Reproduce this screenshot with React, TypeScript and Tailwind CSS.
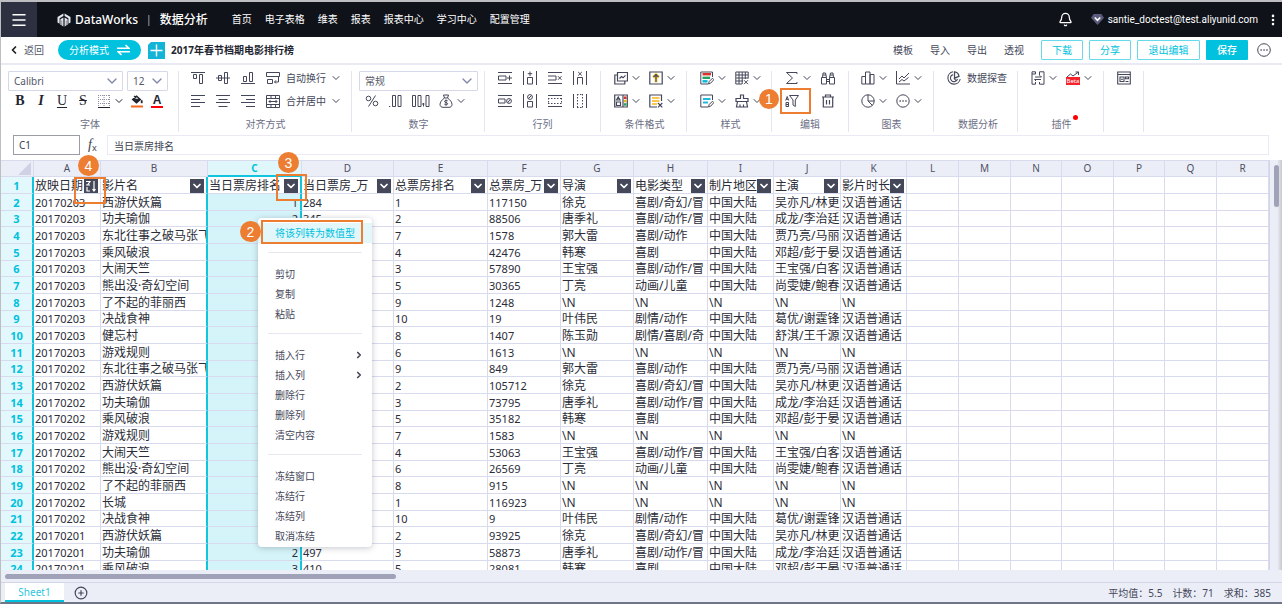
import React from "react";
import {
	Bell,
	ChevronDown,
	ChevronLeft,
	ChevronRight,
	CirclePlus,
	EllipsisVertical,
	Menu,
} from "lucide-react";

type movieType = {
	director: string;
	genre: string;
	region: string;
	cast: string;
	language: string;
};

const none = "\\N";

const unknown: movieType = {
	director: none,
	genre: none,
	region: none,
	cast: none,
	language: none,
};

const movie = (director: string, genre: string, cast: string): movieType => ({
	director,
	genre,
	region: "中国大陆",
	cast,
	language: "汉语普通话",
});

const movies: Record<string, movieType> = {
	西游伏妖篇: movie("徐克", "喜剧/奇幻/冒", "吴亦凡/林更"),
	功夫瑜伽: movie("唐季礼", "喜剧/动作/冒", "成龙/李治廷"),
	东北往事之破马张飞: movie("郭大雷", "喜剧/动作", "贾乃亮/马丽"),
	乘风破浪: movie("韩寒", "喜剧", "邓超/彭于晏"),
	大闹天竺: movie("王宝强", "喜剧/动作/冒", "王宝强/白客"),
	"熊出没·奇幻空间": movie("丁亮", "动画/儿童", "尚雯婕/鲍春"),
	决战食神: movie("叶伟民", "剧情/动作", "葛优/谢霆锋"),
	健忘村: movie("陈玉勋", "剧情/喜剧/奇", "舒淇/王千源"),
};

// date, title, rank of the day, box office of the day, total rank, total box office
const records: string[][] = [
	["20170203", "西游伏妖篇", "1", "284", "1", "117150"],
	["20170203", "功夫瑜伽", "2", "345", "2", "88506"],
	["20170203", "东北往事之破马张飞", "", "", "7", "1578"],
	["20170203", "乘风破浪", "", "", "4", "42476"],
	["20170203", "大闹天竺", "", "", "3", "57890"],
	["20170203", "熊出没·奇幻空间", "", "", "5", "30365"],
	["20170203", "了不起的菲丽西", "", "", "9", "1248"],
	["20170203", "决战食神", "", "", "10", "19"],
	["20170203", "健忘村", "", "", "8", "1407"],
	["20170203", "游戏规则", "", "", "6", "1613"],
	["20170202", "东北往事之破马张飞", "", "", "9", "849"],
	["20170202", "西游伏妖篇", "", "", "2", "105712"],
	["20170202", "功夫瑜伽", "", "", "3", "73795"],
	["20170202", "乘风破浪", "", "", "5", "35182"],
	["20170202", "游戏规则", "", "", "7", "1583"],
	["20170202", "大闹天竺", "", "", "4", "53063"],
	["20170202", "熊出没·奇幻空间", "", "", "6", "26569"],
	["20170202", "了不起的菲丽西", "", "", "8", "915"],
	["20170202", "长城", "", "", "1", "116923"],
	["20170202", "决战食神", "", "", "10", "9"],
	["20170201", "西游伏妖篇", "", "", "2", "93925"],
	["20170201", "功夫瑜伽", "2", "497", "3", "58873"],
	["20170201", "乘风破浪", "3", "410", "5", "28081"],
];

const columns = [
	{ name: "A", width: "w-[67px]", title: "放映日期" },
	{ name: "B", width: "w-[107px]", title: "影片名" },
	{ name: "C", width: "w-[94px]", title: "当日票房排名" },
	{ name: "D", width: "w-[92px]", title: "当日票房_万" },
	{ name: "E", width: "w-[94px]", title: "总票房排名" },
	{ name: "F", width: "w-[73px]", title: "总票房_万" },
	{ name: "G", width: "w-[73px]", title: "导演" },
	{ name: "H", width: "w-[74px]", title: "电影类型" },
	{ name: "I", width: "w-[66px]", title: "制片地区" },
	{ name: "J", width: "w-[67px]", title: "主演" },
	{ name: "K", width: "w-[66px]", title: "影片时长" },
	{ name: "L", width: "w-[52px]", title: "" },
	{ name: "M", width: "w-[52px]", title: "" },
	{ name: "N", width: "w-[51px]", title: "" },
	{ name: "O", width: "w-[52px]", title: "" },
	{ name: "P", width: "w-[51px]", title: "" },
	{ name: "Q", width: "w-[52px]", title: "" },
	{ name: "R", width: "w-[52px]", title: "" },
];

const navItems = ["首页", "电子表格", "维表", "报表", "报表中心", "学习中心", "配置管理"];
const fileActions = ["模板", "导入", "导出", "透视"];
const menuGroups = [
	["剪切", "复制", "粘贴"],
	["插入行", "插入列", "删除行", "删除列", "清空内容"],
	["冻结窗口", "冻结行", "冻结列", "取消冻结"],
];

type iconProps = { children: React.ReactNode; wide?: boolean };
function Icon({ children, wide }: iconProps) {
	return (
		<svg
			viewBox={wide ? "0 0 19 14" : "0 0 14 14"}
			className={wide ? "h-3.5 w-[19px]" : "size-3.5"}
			fill="none"
			stroke="currentColor"
			strokeWidth="1"
		>
			{children}
		</svg>
	);
}

type toolProps = {
	label: string;
	children: React.ReactNode;
	text?: string;
	arrow?: boolean;
	wide?: boolean;
};
function Tool({ label, children, text, arrow, wide }: toolProps) {
	return (
		<button
			aria-label={text ? undefined : label}
			title={label}
			className="flex h-3.5 shrink-0 cursor-pointer items-center gap-1"
		>
			<Icon wide={wide}>{children}</Icon>
			{text && <span className="mx-0.5 leading-[14px] whitespace-nowrap">{text}</span>}
			{arrow && <ChevronDown className="-mx-0.5 size-3" strokeWidth={2} />}
		</button>
	);
}

type groupProps = {
	label: string;
	className: string;
	top: React.ReactNode;
	bottom?: React.ReactNode;
	bottomClass?: string;
	dot?: boolean;
};
function Group({ label, className, top, bottom, bottomClass = "gap-[11px]", dot }: groupProps) {
	return (
		<div className={`flex h-[61px] shrink-0 flex-col border-r border-[#e3e5f0] ${className}`}>
			<div className={`flex h-6 items-start ${bottomClass}`}>{top}</div>
			<div className={`flex h-[22px] items-start ${bottomClass}`}>{bottom}</div>
			<p className="self-center leading-4 text-[#6b6e85]">
				<span className="relative">
					{label}
					{dot && <span className="absolute -top-0.5 -right-1.5 size-[5px] rounded-full bg-[#ff0000]" />}
				</span>
			</p>
		</div>
	);
}

type pickerProps = { label: string; value: string; className: string };
function Picker({ label, value, className }: pickerProps) {
	return (
		<div className={`relative ${className}`}>
			<select
				aria-label={label}
				className="h-5 w-full appearance-none rounded-[1px] border border-[#d5d8e8] bg-white pl-[5px] text-[10px] leading-4 text-[#555869]"
			>
				<option>{value}</option>
			</select>
			<ChevronDown className="pointer-events-none absolute top-0.5 right-[3px] size-4 text-[#8186a8]" />
		</div>
	);
}

function TopBar() {
	return (
		<header className="flex h-[35px] shrink-0 items-center bg-[#0f1219] pr-0.5 text-[10px] text-white">
			<button aria-label="菜单" className="flex h-full w-9 items-center justify-center bg-[#2d3040]">
				<Menu className="size-[18px]" strokeWidth={2} />
			</button>
			<svg viewBox="0 0 14 14" className="ml-5 size-3.5" fill="#e4e7ee">
				<path d="M.5 4 6.4.6V3L2.6 5.2v5.6L.5 9.6zM7.6.6 13.5 4v5.6l-2.1 1.2V5.2L7.6 3z" />
				<path d="M3.4 6.2 6.4 4.4v9.2l-1.300-.8V7.200l-.4.2v5.1l-1.3-.8zM7.600 4.4l3 1.8v5.5l-1.3.8V7.400l-.4-.2v5.6l-1.3.8z" />
			</svg>
			<span className="ml-1 text-[12px] font-medium">DataWorks</span>
			<span className="mx-2 text-[10px] text-[#b8bac4]">|</span>
			<span className="text-[12px] font-medium whitespace-nowrap">数据分析</span>
			<nav className="ml-6 flex gap-[13px]">
				{navItems.map((item) => (
					<a key={item} href="#" className="whitespace-nowrap">
						{item}
					</a>
				))}
			</nav>
			<button aria-label="通知" className="ml-auto">
				<Bell className="size-[15px]" strokeWidth={2} />
			</button>
			<svg viewBox="0 0 12 12" className="ml-[18px] size-[13px]">
				<path d="M2.5 1h7L12 4.3 6 11 0 4.3z" fill="#5c5b7d" />
				<path d="M3.5 4.2 6 6.8l2.5-2.6" fill="none" stroke="#fff" strokeWidth="1.5" />
			</svg>
			<span className="ml-1 font-['Roboto',sans-serif] text-[10px]">santie_doctest@test.aliyunid.com</span>
			<button aria-label="更多" className="ml-2">
				<EllipsisVertical className="size-3.5" strokeWidth={2.5} />
			</button>
		</header>
	);
}

function TitleBar() {
	return (
		<div className="flex h-7 shrink-0 items-center border-b-2 border-[#e9eaf3] pr-[11px] pl-[7px]">
			<a href="#" className="flex items-center gap-1 text-[#555869]">
				<ChevronLeft className="size-3 text-[#222]" strokeWidth={3.5} />
				返回
			</a>
			<button className="ml-3.5 flex h-5 w-[83px] items-center justify-center gap-2 rounded-full bg-[#00c1de] text-white">
				分析模式
				<svg viewBox="0 0 13 12" className="h-3 w-[13px]" fill="none" stroke="currentColor" strokeWidth="1.6">
					<path d="M0 4.3h12L8.5 1M13 7.7H1L4.5 11" />
				</svg>
			</button>
			<svg viewBox="0 0 17 17" className="ml-[7px] size-[17px]">
				<path d="M3 0h14v17H0V3z" fill="#14b4d8" />
				<path d="M8.5 2.5v12M2.5 8.5h12" stroke="#fff" strokeWidth="1.4" />
			</svg>
			<h1 className="ml-1.5 font-bold whitespace-nowrap text-[#222530]">2017年春节档期电影排行榜</h1>
			<div className="ml-auto flex items-center gap-[17px]">
				{fileActions.map((action) => (
					<button key={action} className="whitespace-nowrap">
						{action}
					</button>
				))}
			</div>
			<div className="ml-[17px] flex items-center gap-1.5 text-[#00c1de]">
				<button className="h-5 w-[42px] rounded-[1px] border border-[#66daeb]">下载</button>
				<button className="h-5 w-[42px] rounded-[1px] border border-[#66daeb]">分享</button>
				<button className="h-5 w-[63px] rounded-[1px] border border-[#66daeb]">退出编辑</button>
				<button className="h-5 w-[42px] rounded-[1px] bg-[#00c1de] font-medium text-white">保存</button>
			</div>
			<button aria-label="更多操作" className="ml-[9px]">
				<Icon>
					<circle cx="7" cy="7" r="6.3" />
					<path d="M3.5 7h1.3M6.4 7h1.3M9.3 7h1.3" strokeWidth="1.3" />
				</Icon>
			</button>
		</div>
	);
}

function Toolbar() {
	return (
		<div className="flex shrink-0 overflow-hidden pt-1.5 pb-[3px]">
			<div className="flex h-[61px] w-[178px] shrink-0 flex-col border-r border-[#e3e5f0] pl-[7px]">
				<div className="flex h-6 gap-1">
					<Picker label="字体" value="Calibri" className="w-[115px]" />
					<Picker label="字号" value="12" className="w-[41px]" />
				</div>
				<div className="flex h-[22px] items-start gap-[7px] pl-[5px] font-['Liberation_Serif',serif] text-[14px] leading-[14px] text-[#222530]">
					<button aria-label="加粗" className="w-3.5 font-bold">
						B
					</button>
					<button aria-label="斜体" className="w-3.5 font-bold italic">
						I
					</button>
					<button aria-label="下划线" className="w-3.5">
						<span className="underline underline-offset-2">U</span>
					</button>
					<button aria-label="删除线" className="w-3.5 line-through">
						S
					</button>
					<Tool label="边框" arrow>
						<path d="M1 1.5h12M1 5.5h12M1 9.5h12M1.5 1v11M7 1v11M12.5 1v11" stroke="#8b8ea3" strokeDasharray="1 1" />
						<path d="M1 13.5h12" />
					</Tool>
					<Tool label="填充颜色">
						<path d="M2.5 5.5 6.5 2l4 3.5-4 3.5zM4 2l2 1.5" fill="#222530" strokeWidth="1.2" />
						<path d="M5 4.7h3.5L6.6 3.3z" fill="#fff" stroke="none" />
						<path d="M11.7 6.2v3" strokeWidth="1.8" />
						<path d="M1 12.5h12" stroke="#f26a1b" strokeWidth="2" />
					</Tool>
					<button
						aria-label="字体颜色"
						className="h-3.5 w-3 border-b-2 border-[#ff0000] font-['Liberation_Sans',sans-serif] text-[12px] leading-3 font-bold"
					>
						A
					</button>
				</div>
				<p className="self-center pr-1.5 leading-4 text-[#6b6e85]">字体</p>
			</div>

			<Group
				label="对齐方式"
				className="pr-[11px] pl-3"
				top={
					<>
						<Tool label="顶端对齐">
							<path d="M0 1.5h14M2.5 3.5h3v4h-3zM8.5 3.5h3v9h-3z" />
						</Tool>
						<Tool label="垂直居中">
							<path d="M0 7h14M2.5 4.5h3v5h-3zM8.5 1.5h3v11h-3z" />
						</Tool>
						<Tool label="底端对齐">
							<path d="M0 12.5h14M2.5 5.5h3v5h-3zM8.5 1.5h3v9h-3z" />
						</Tool>
						<Tool label="自动换行" text="自动换行" arrow>
							<path d="M.5 1.5h13v4H.5zM1.5 8.5h5v4h-5zM12.5 5.5V11h-4M10 9.300 8.500 11l1.500 1.500" />
						</Tool>
					</>
				}
				bottom={
					<>
						<Tool label="左对齐">
							<path d="M0 1.5h14M0 5.5h9M0 8.5h14M0 12.5h9" />
						</Tool>
						<Tool label="居中对齐">
							<path d="M0 1.5h14M2.5 5.5h9M0 8.5h14M2.5 12.5h9" />
						</Tool>
						<Tool label="右对齐">
							<path d="M0 1.5h14M5 5.5h9M0 8.5h14M5 12.5h9" />
						</Tool>
						<Tool label="合并居中" text="合并居中" arrow>
							<path d="M.5 1.5h13v12H.5zM.5 4.5h13M.5 10.5h13M5 1.5v3M9.5 1.5v3M5 10.5v3M9.5 10.5v3M3 7.5h8M4.5 6 3 7.5 4.500 9M9.500 6 11 7.5 9.500 9" />
						</Tool>
					</>
				}
			/>

			<Group
				label="数字"
				className="pr-1.5 pl-[7px]"
				top={<Picker label="数字格式" value="常规" className="w-[119px]" />}
				bottom={
					<div className="flex gap-[9px] pl-1.5">
						<Tool label="百分比">
							<circle cx="3.5" cy="4.5" r="2.3" />
							<circle cx="10.5" cy="9.5" r="2.3" />
							<path d="M10.5 1.5 3.5 12.5" />
						</Tool>
						<Tool label="减少小数位">
							<path d="M1 12.5h1.3M4.5 1.5h3v11h-3zM10 1.5h3v11h-3z" />
						</Tool>
						<Tool label="增加小数位" wide>
							<path d="M1.5 1.5h3v11h-3zM7 1.5h3v11H7zM15 1.5h3v11h-3zM11 10h2.5M12.5 9v3.5" />
						</Tool>
						<Tool label="货币" arrow>
							<path d="M4.5 1h5l-1 3h-3zM5.5 4C2.5 6 1 8.5 1 10.5s1.500 2.800 3 2.800h6c1.500 0 3-.8 3-2.800S11.500 6 8.500 4" />
							<path d="M8.700 6.900c-1-.9-3.200-.6-3.200.6 0 1.500 3.200.8 3.200 2.200 0 1.300-2.300 1.400-3.400.4M7 5.600v6" />
						</Tool>
					</div>
				}
			/>

			<Group
				label="行列"
				className="px-[13px]"
				top={
					<>
						<Tool label="插入行">
							<path d="M0 1.5h14M0 12.5h14M.5 5H8v4H.5zM11.5 4.5v5M9 7h5" />
						</Tool>
						<Tool label="插入列">
							<path d="M.5 0v14M13.5 0v14M4.5 6.5h5V13h-5zM7 .5V5M4.8 2.7h4.4" />
						</Tool>
						<Tool label="删除行">
							<path d="M0 1.5h14M0 12.5h14M0 5h8v4H0M10 5.2l3.5 3.6M13.5 5.2 10 8.8" />
						</Tool>
						<Tool label="删除列">
							<path d="M.5 0v14M13.5 0v14M4.5 13.5v-7h5v7M5.2 1l3.6 3.5M8.8 1 5.2 4.5" />
						</Tool>
					</>
				}
				bottom={
					<>
						<Tool label="隐藏行">
							<path d="M0 1.5h14M0 12.5h14M.5 5H7v4H.5zM9.5 8.8l3-3.6" />
							<circle cx="11" cy="7" r="2.4" />
						</Tool>
						<Tool label="隐藏列">
							<path d="M.5 0v14M13.5 0v14M4.5 7.5h5V13h-5zM5.5 4.5l3-3" />
							<circle cx="7" cy="3" r="2.4" />
						</Tool>
						<Tool label="取消隐藏行">
							<path d="M0 1.5h14M0 12.5h14" />
							<path d="M0 4.5h14M0 9.5h14M.5 4v6M13.5 4v6" strokeDasharray="1.5 1.5" />
						</Tool>
						<Tool label="取消隐藏列">
							<path d="M.5 0v14M13.5 0v14" />
							<path d="M4.5 0v14M9.5 0v14M4 .5h6M4 13.5h6" strokeDasharray="1.5 1.5" />
						</Tool>
					</>
				}
			/>

			<Group
				label="条件格式"
				className="pr-[11px] pl-[13px]"
				bottomClass="gap-[9px]"
				top={
					<>
						<Tool label="突出显示" arrow>
							<path d="M3.5 1.5h10V10h-10zM3.5 4H.8v9h10v-3M5.5 7.5l2-2L9 6.800l2.500-2.500" strokeWidth="1.2" />
						</Tool>
						<Tool label="色阶" arrow>
							<path d="M7 11.5V5M4 6.5l3-3 3 3" stroke="#ffd24a" strokeWidth="3" />
							<path d="M.8 1h12.4v12H.8zM7 11V4M4.5 6 7 3.5 9.5 6" strokeWidth="1.2" />
						</Tool>
					</>
				}
				bottom={
					<>
						<Tool label="图标集" arrow>
							<path d="M.7 1h12.6v12H.7zM9 1v12M2.5 6l1.7-3L6 6zM2.5 8h4v3.5h-4z" strokeWidth="1.2" />
							<path d="M10 2.5h2.5V5H10z" fill="#e0302a" stroke="none" />
							<path d="M10 5.8h2.5v2.5H10z" fill="#e8b21a" stroke="none" />
							<path d="M10 9.2h2.5v2.5H10z" fill="#20a465" stroke="none" />
						</Tool>
						<Tool label="清除规则" arrow>
							<path d="M12.5 7V1H.8v12H8M9 9l4.3 4.3M13.3 9 9 13.3" strokeWidth="1.2" />
							<path d="M3 4h7.5M3 7h7.5M3 10h5" stroke="#ffc84d" strokeWidth="2" />
						</Tool>
					</>
				}
			/>

			<Group
				label="样式"
				className="pr-2.5 pl-[13px]"
				bottomClass="gap-[9px]"
				top={
					<>
						<Tool label="套用格式" arrow>
							<path d="M12.5 6V1H.8v12H8M8.5 13l.7-2.5 3.3-3.3 1.3 1.5-3.2 3.5z" />
							<path d="M2.5 3.2H11" stroke="#e0302a" strokeWidth="2.4" />
							<path d="M2.5 6.8H10" stroke="#20a465" strokeWidth="2.4" />
							<path d="M2.5 10.3h5" stroke="#00b8d9" strokeWidth="2.4" />
						</Tool>
						<Tool label="清除表格样式" arrow>
							<path d="M7 13H.8V1h12.400v6.500M.8 4h12.400M.8 7h12.400M.8 10H8M4 1v12M7.200 1v12M10.300 1v7M9 9.200l4 4M13 9.200l-4 4" />
						</Tool>
					</>
				}
				bottom={
					<>
						<Tool label="单元格样式" arrow>
							<path d="M12.5 6V1H.8v12H8M8.5 13l.7-2.5 3.3-3.3 1.3 1.5-3.2 3.5z" />
							<path d="M3 5h7.5M3 8.5h5" stroke="#22b8e0" strokeWidth="1.8" />
						</Tool>
						<Tool label="清除格式" arrow>
							<path d="M5.5 4.5V1h3v3.500H13v3H1v-3zM2.500 7.500l-1 5.500h11l-1-5.500M5 10.500V13M8.500 10.500V13" strokeWidth="1.2" />
						</Tool>
					</>
				}
			/>

			<Group
				label="编辑"
				className="px-[13px]"
				bottomClass="justify-between"
				top={
					<>
						<Tool label="求和" arrow>
							<path d="M12 3V1.500H1.500L7.500 7l-6 5.500H12V11" />
						</Tool>
						<span className="w-2.5" />
						<Tool label="查找">
							<path d="M.5 6.500h5V13h-5zM8.500 6.500h5V13h-5zM1.500 6.500 2 2h2.500l1 4.500M8.500 6.500l1-4.500H12l.5 4.500M5.500 8.500h3M5.500 10.500h3M2 4h3M9 4h3" />
						</Tool>
					</>
				}
				bottom={
					<>
						<div className="relative">
							<Tool label="筛选">
								<path d="M4.500 1.500h9L10.300 6v6.500L8 11V6zM.7 6.500l1.500-4 1.500 4M1.200 5.300h2M1 8.500h2.500v4H1zM1 10.500h2.500" />
							</Tool>
							<Marker text="1" box="-top-1.5 -left-[5px] h-[26px] w-[31px]" dot="-top-[5px] -left-[26px] size-5" />
						</div>
						<Tool label="删除">
							<path d="M1 3h12M4.5 3V1h5v2M2.3 3v10h9.4V3M5.5 6v4.5M8.5 6v4.5" strokeWidth="1.2" />
						</Tool>
					</>
				}
			/>

			<Group
				label="图表"
				className="pr-[11px] pl-3"
				bottomClass="gap-[9px]"
				top={
					<>
						<Tool label="柱状图" arrow>
							<path d="M.8 5.5h3.7V13H.8zM4.5 1H9v12H4.5zM9 3.5h4V13H9z" />
						</Tool>
						<Tool label="折线图" arrow>
							<path d="M.5 0v13H14M3 8l3-3 2 2 5-5M3 11l3-2.5L8 10l4.500-3.500" />
						</Tool>
					</>
				}
				bottom={
					<>
						<Tool label="饼图" arrow>
							<circle cx="7" cy="7" r="6.2" />
							<path d="M7 .8V7h6.2M7 7l4.4 4.4" />
						</Tool>
						<Tool label="更多图表" arrow>
							<circle cx="7" cy="7" r="6.2" />
							<path d="M3.5 7h1.3M6.4 7h1.3M9.3 7h1.3" strokeWidth="1.3" />
						</Tool>
					</>
				}
			/>

			<Group
				label="数据分析"
				className="pr-2 pl-[13px]"
				top={
					<Tool label="数据探查" text="数据探查">
						<path d="M6 .8A6.200 6.200 0 1 0 13.200 8M6 3.600A3.600 3.600 0 1 0 10.500 8M7 7.300l2.500 2.700" strokeWidth="1.1" />
						<path d="M7.500.8v6.400L12 5.300C11.600 2.800 10 1 7.500.8z" strokeWidth="1.3" />
					</Tool>
				}
			/>

			<Group
				label="插件"
				dot
				className="pr-[11px] pl-[13px]"
				bottomClass="gap-[9px]"
				top={
					<>
						<Tool label="插件" arrow>
							<path d="M4.5 3V.8H1v12.400h3.500V11M8.500 3V.8H13v12.400H8.500V11M1 3h3.500M8.500 3v1.500M4 6h6.500M9 4.500 10.500 6M10 8.500H3.500M5 10 3.500 8.500" />
						</Tool>
						<span className="relative">
							<Tool label="智能图表" arrow>
								<path d="M1 6l3.500-3L7 5l5.500-4M9.500 1h3v3" />
							</Tool>
							<span className="absolute top-1.5 left-0 flex h-2 w-3.5 items-center justify-center bg-[#f5222d] text-[6px] leading-none text-white">
								Beta
							</span>
						</span>
					</>
				}
			/>

			<Group
				label=""
				className="pr-3 pl-[13px]"
				top={
					<Tool label="表单">
						<path d="M.7 1h12.6v12H.7zM.7 3.5h12.600M3 6h4v4.500H3zM8.500 6h3v1.800h-3zM8.500 10.500h3M4 8.200h2" strokeWidth="1.1" />
					</Tool>
				}
			/>
		</div>
	);
}

function FormulaBar() {
	return (
		<div className="flex shrink-0 items-center pr-[13px] pb-[5px] pl-3 text-[#3c3f4f]">
			<input
				aria-label="单元格"
				defaultValue="C1"
				className="h-5 w-[67px] border border-[#9b9da6] px-[5px] text-[10px]"
			/>
			<span className="w-[27px] pl-2 font-['Liberation_Serif',serif] text-[14px] leading-4 italic">
				f<sub className="font-['Noto_Sans',sans-serif] text-[9px] not-italic">x</sub>
			</span>
			<input
				aria-label="公式"
				defaultValue="当日票房排名"
				className="h-5 min-w-0 flex-1 border border-[#e9eaf3] px-1.5 text-[10px]"
			/>
		</div>
	);
}

type markerProps = { text: string; box: string; dot: string };
function Marker({ text, box, dot }: markerProps) {
	return (
		<>
			<span className={`pointer-events-none absolute border-2 border-[#ed7d31] ${box}`} />
			<span
				className={`pointer-events-none absolute flex items-center justify-center rounded-full bg-[#ed7d31] font-['Liberation_Sans',sans-serif] text-[14px] leading-none text-white ${dot}`}
			>
				{text}
			</span>
		</>
	);
}

function cellBorder(name: string) {
	return name === "B" || name === "C" ? "border-r-2 border-r-[#12c4de]" : "border-r border-r-[#d8daee]";
}

// three rows take 50px together
function rowHeight(index: number) {
	return index % 3 === 2 ? "h-4" : "h-[17px]";
}

function FilterButton({ name }: { name: string }) {
	return (
		<button
			aria-label={`筛选 ${name}`}
			className="flex size-3.5 shrink-0 items-center justify-center bg-[#454859] text-white"
		>
			{name === "A" ? (
				<Icon>
					<path d="M2 2.5h4L3.5 6M2 6h4M3 8v4h3M10 2v10M8.5 10.2 10 12l1.5-1.8" strokeWidth="1.2" />
				</Icon>
			) : (
				<ChevronDown className="size-3" strokeWidth={3.5} />
			)}
		</button>
	);
}

function Sheet() {
	const rows = records.map((record) => {
		const info = movies[record[1]] ?? unknown;
		return [...record, info.director, info.genre, info.region, info.cast, info.language];
	});

	return (
		<table className="w-full table-fixed border-separate border-spacing-0 bg-white text-[12px] leading-[14px] text-[#2b2d38]">
			<colgroup>
				<col className="w-[33px]" />
				{columns.map((column) => (
					<col key={column.name} className={column.width} />
				))}
			</colgroup>
			<thead>
				<tr className="h-[17px] bg-[#eceef7] text-[10px] text-[#4e5163]">
					<th className="border-t border-r border-b border-[#d8daee] p-0">
						<svg viewBox="0 0 13 13" className="mr-0.5 ml-auto size-[13px]">
							<path d="M13 0v13H0z" fill="#cfd2e6" />
						</svg>
					</th>
					{columns.map((column) => (
						<th
							key={column.name}
							className={
								column.name === "C"
									? "border-t border-r border-b-2 border-t-[#d8daee] border-r-[#d8daee] border-b-[#12c4de] bg-[#dff6fa] p-0 leading-[13px] font-bold text-[#00c1de]"
									: "border-t border-r border-b border-[#d8daee] p-0 leading-[13px] font-normal"
							}
						>
							{column.name}
						</th>
					))}
				</tr>
			</thead>
			<tbody>
				<tr className="h-[17px]">
					<th className="border-r-2 border-b border-r-[#12c4de] border-b-[#d8daee] bg-[#e3f8fc] p-0 pt-px text-[11px] font-bold text-[#00c1de]">
						1
					</th>
					{columns.map((column) => (
						<td key={column.name} className={`border-b border-b-[#d8daee] p-0 pt-px ${cellBorder(column.name)}`}>
							{column.title && (
								<div className="flex items-center pr-0.5 pl-px">
									<span className="flex-1 overflow-hidden whitespace-nowrap">{column.title}</span>
									<FilterButton name={column.name} />
								</div>
							)}
						</td>
					))}
				</tr>
				{rows.map((row, index) => (
					<tr key={index} className={rowHeight(index + 1)}>
						<th className="border-r-2 border-b border-r-[#12c4de] border-b-[#d8daee] bg-[#e3f8fc] p-0 pt-px text-[11px] font-bold text-[#00c1de]">
							{index + 2}
						</th>
						{columns.map((column, i) => (
							<td
								key={column.name}
								className={`overflow-hidden border-b border-b-[#d8daee] p-0 pt-px pl-px whitespace-nowrap ${cellBorder(column.name)} ${
									column.name === "C" ? "bg-[#d5f4f9] pr-0.5 text-right" : ""
								} ${/^\d+$/.test(row[i] ?? "") ? "text-[11px]" : ""}`}
							>
								{row[i]}
							</td>
						))}
					</tr>
				))}
			</tbody>
		</table>
	);
}

function ContextMenu() {
	return (
		<div
			role="menu"
			className="absolute top-[58px] left-[257px] w-[114px] rounded-sm bg-white pt-[5px] pb-px text-[#44475a] shadow-[0_1px_6px_rgba(60,65,90,0.3)]"
		>
			<button role="menuitem" className="block h-5 w-full bg-[#e3f7fb] pl-[17px] text-left text-[#00c1de]">
				将该列转为数值型
			</button>
			{menuGroups.map((group) => (
				<div key={group[0]}>
					<hr className="mx-2.5 mt-[9px] mb-[11px] border-[#e6e7f1]" />
					{group.map((item) => (
						<button
							key={item}
							role="menuitem"
							className="flex h-5 w-full items-center justify-between pr-2 pl-[17px] text-left"
						>
							{item}
							{item.startsWith("插入") && <ChevronRight className="size-2.5" strokeWidth={4} />}
						</button>
					))}
				</div>
			))}
		</div>
	);
}

function StatusBar() {
	return (
		<footer className="flex h-5 shrink-0 items-center border-t border-[#d3d6e8] bg-[#eceef7] pr-[11px] pl-1">
			<button className="h-full w-[59px] border-b-2 border-[#00c1de] bg-white pt-0.5 text-[#2cc5dd]">Sheet1</button>
			<button aria-label="新建工作表" className="ml-2.5">
				<CirclePlus className="size-3.5" strokeWidth={2} />
			</button>
			<div className="ml-auto flex gap-2.5 pt-0.5 whitespace-nowrap">
				<span>平均值：5.5</span>
				<span>计数：71</span>
				<span>求和：385</span>
			</div>
		</footer>
	);
}

export default function App() {
	return (
		<div className="flex h-screen flex-col overflow-hidden border-t-2 border-b-2 border-l border-t-[#bcbec2] border-b-[#6d7686] border-l-[#bcbec2] bg-white font-['Noto_Sans','Noto_Sans_CJK_SC',sans-serif] text-[10px] text-[#44475a]">
			<TopBar />
			<TitleBar />
			<Toolbar />
			<FormulaBar />
			<main className="relative flex min-h-0 flex-1">
				<div className="min-w-0 flex-1 overflow-hidden">
					<Sheet />
				</div>
				<div className="w-[13px] shrink-0 border-l border-[#d3d6e8] bg-gradient-to-r from-[#eceef7] from-60% to-[#c6c8d0] pt-[5px] pl-1">
					<div className="h-[42px] w-[5px] rounded-full bg-[#a0a2b8]" />
				</div>
				<ContextMenu />
				<Marker text="2" box="top-[60px] left-[260px] h-6 w-[102px]" dot="top-[61px] left-[239px] size-[21px]" />
				<Marker text="3" box="top-3.5 left-[275px] h-[27px] w-[31px]" dot="-top-2 left-[277px] size-[21px]" />
				<Marker text="4" box="top-[17px] left-[73px] h-[27px] w-8" dot="-top-[5px] left-[77px] size-[21px]" />
			</main>
			<div className="shrink-0 bg-[#eceef7] px-1 pt-1 pb-[3px]">
				<div className="h-[5px] w-[391px] rounded-full bg-[#a0a2b8]" />
			</div>
			<StatusBar />
		</div>
	);
}
